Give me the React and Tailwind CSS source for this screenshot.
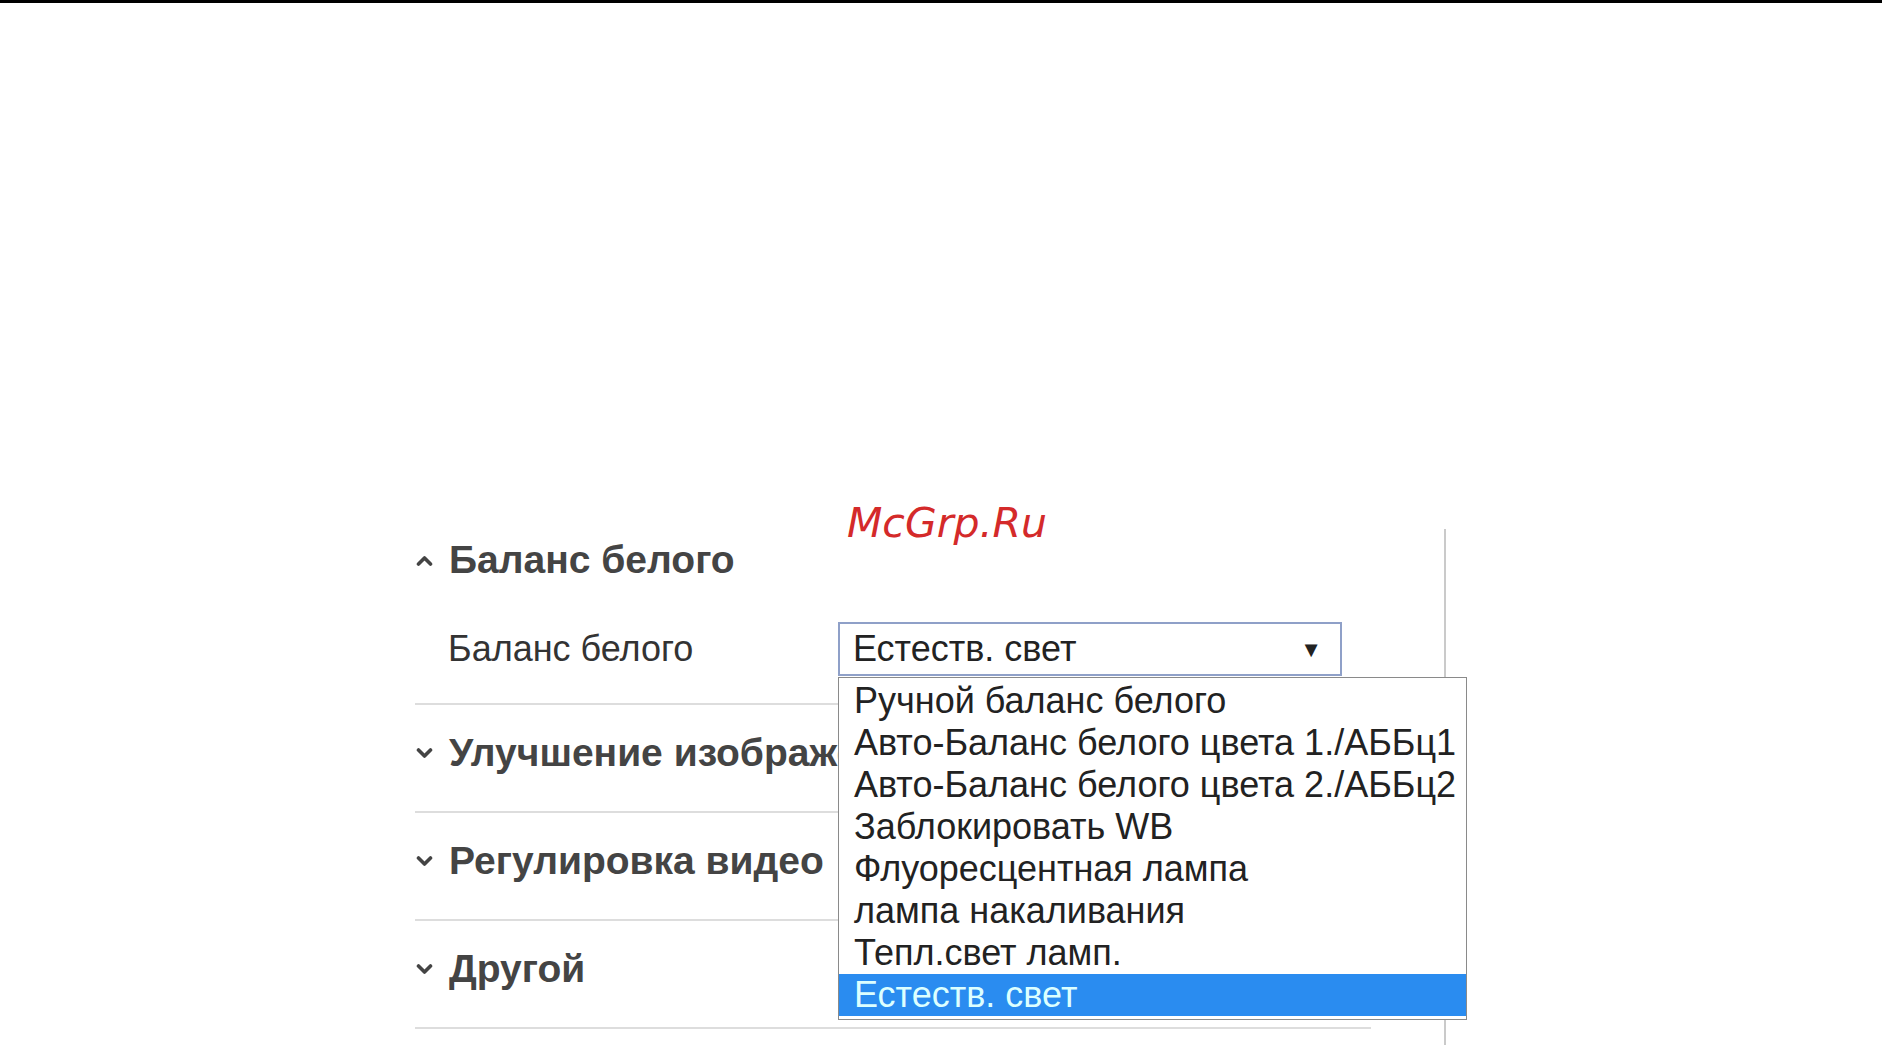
import React from "react";

const Chevron = ({ up }) => (
  <svg width="17" height="11" viewBox="0 0 17 11" className="shrink-0">
    <path
      d={up ? "M2.5 9 L8.5 3 L14.5 9" : "M2.5 2 L8.5 8 L14.5 2"}
      fill="none"
      stroke="#444"
      strokeWidth="3.6"
      strokeLinecap="round"
      strokeLinejoin="round"
    />
  </svg>
);

const items = [
  "Ручной баланс белого",
  "Авто-Баланс белого цвета 1./АББц1",
  "Авто-Баланс белого цвета 2./АББц2",
  "Заблокировать WB",
  "Флуоресцентная лампа",
  "лампа накаливания",
  "Тепл.свет ламп.",
  "Естеств. свет",
];

export default function App() {
  return (
    <div className="relative w-[1882px] h-[1045px] overflow-hidden bg-white font-['Liberation_Sans',Arial,sans-serif]">
      <div className="h-[3px] bg-black" />
      <div className="pt-[526px] pl-[415px]">
        <div className="w-[1031px] h-[516px] border-r-2 border-[#cacaca]">
          <div className="w-[956px]">
            <div className="h-[64px] flex items-center gap-[16px] pl-[1px] pb-[2px]">
              <Chevron up />
              <span className="text-[39px] font-bold text-[#444]">Баланс белого</span>
            </div>
            <div className="h-[112px] flex items-start pt-[29px] border-b-2 border-[#ddd]">
              <div className="w-[423px] h-[54px] flex items-center pl-[33px] text-[36px] text-[#333]">
                Баланс белого
              </div>
              <div className="w-[504px] h-[54px] border-2 border-[#8fa0c8] flex items-center justify-between pl-[13px] pr-[18px] text-[36px] text-[#222]">
                <span>Естеств. свет</span>
                <span className="text-[22px]">▼</span>
              </div>
            </div>
            {["Улучшение изображения", "Регулировка видео", "Другой"].map((t) => (
              <div key={t} className="h-[108px] flex items-center pb-[10px] border-b-2 border-[#ddd]">
                <div className="w-[423px] overflow-hidden flex items-center gap-[16px] pl-[1px]">
                  <Chevron />
                  <span className="text-[39px] font-bold text-[#444] whitespace-nowrap">{t}</span>
                </div>
              </div>
            ))}
          </div>
        </div>
      </div>

      <div className="absolute left-[838px] top-[677px] w-[629px] border border-[#8a8a8a] bg-white pt-[2px] pb-[3px]">
        {items.map((t, i) => (
          <div
            key={t}
            className={
              "h-[42px] flex items-center pl-[15px] text-[36px] whitespace-nowrap " +
              (i === items.length - 1 ? "bg-[#2a8cf0] text-[#dcffff]" : "text-[#222]")
            }
          >
            {t}
          </div>
        ))}
      </div>

      <div className="absolute left-[847px] top-[503px] text-[41px] italic text-[#d42a2a] font-['DejaVu_Sans',sans-serif] leading-none">
        McGrp.Ru
      </div>
    </div>
  );
}
